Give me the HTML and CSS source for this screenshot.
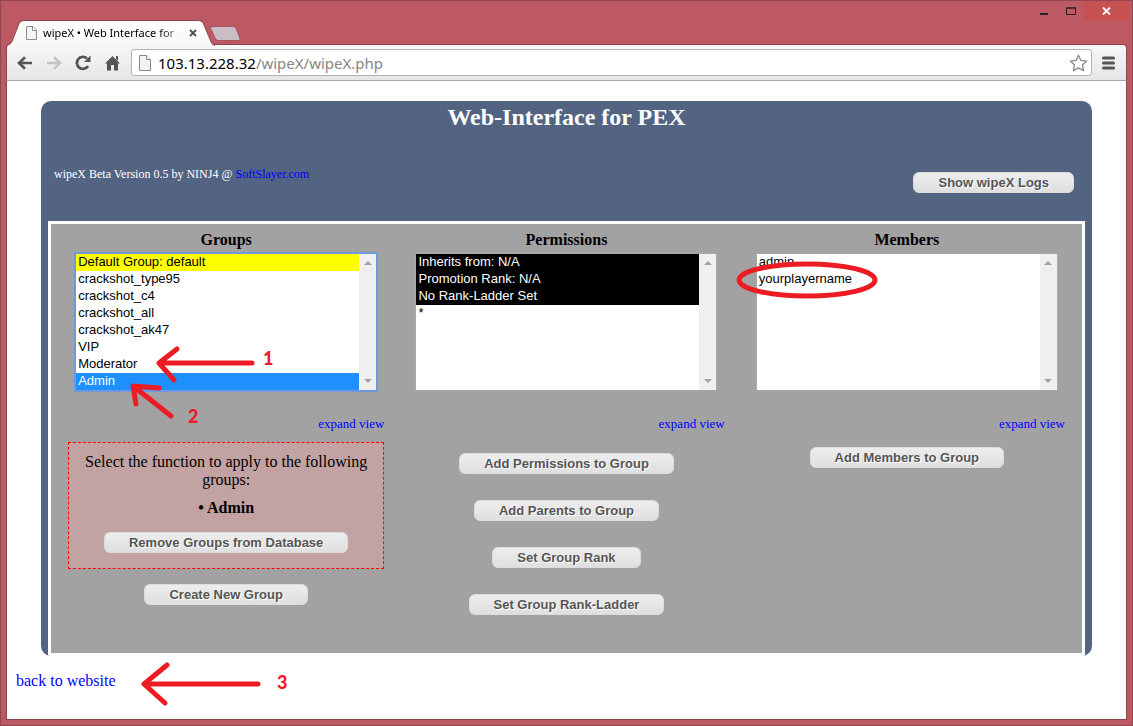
FILE: index.html
```html
<!DOCTYPE html>
<html lang="en">
<head>
<meta charset="utf-8">
<title>wipeX • Web Interface for PEX</title>
<link rel="stylesheet" href="styles.css">
</head>
<body>
<div class="window">
  <header class="titlebar">
    <div class="tab">
      <svg class="tab-shape" width="208" height="26" viewBox="0 0 208 25" preserveAspectRatio="none" aria-hidden="true">
        <defs><linearGradient id="tabfill" x1="0" y1="0" x2="0" y2="1"><stop offset="0" stop-color="#fff"/><stop offset="1" stop-color="#f7f7f7"/></linearGradient></defs>
        <path d="M0 24.500Q4 23 5 20.500L12 3.500Q13.500.5 17 .5H191Q195 .5 196.500 3.500L204 21Q205.500 24 208 24.500V25H0Z" fill="url(#tabfill)"/>
        <path d="M0 24.500Q4 23 5 20.500L12 3.500Q13.500.5 17 .5H191Q195 .5 196.500 3.500L204 21Q205.500 24 208 24.500" fill="none" stroke="#8d444d"/>
      </svg>
      <svg class="tab-icon" width="11" height="14" viewBox="0 0 11 14" aria-hidden="true"><path d="M.5.500H7L10.500 4V13.500H.5Z" fill="#f3f3f3" stroke="#8c8c8c"/><path d="M6.500.500V4.500H10.500" fill="#fff" stroke="#8c8c8c"/></svg>
      <span class="tab-title">wipeX • Web Interface for</span>
      <button class="tab-close" aria-label="Close tab"><svg width="8" height="8" viewBox="0 0 8 8"><path d="M1 1L7 7M7 1L1 7" stroke="#4d4d4d" stroke-width="1.800"/></svg></button>
    </div>
    <button class="new-tab" aria-label="New tab"><svg width="31" height="15" viewBox="0 0 31 15"><path d="M2 .5H23Q25 .5 26 2.500L30 12.500Q30.500 14.500 28.500 14.500H8.500Q6 14.500 5 12L.7 2.500Q.3.5 2 .5Z" fill="#cbbdc6" stroke="#a8525d"/></svg></button>
    <div class="window-buttons">
      <button class="win" aria-label="Minimize"><svg width="10" height="10" viewBox="0 0 10 10"><path d="M1 8H9" stroke="#222" stroke-width="2"/></svg></button>
      <button class="win" aria-label="Maximize"><svg width="10" height="8" viewBox="0 0 10 8"><path d="M.5 1H9.500V7.500H.5ZM0 1H10" fill="none" stroke="#222"/></svg></button>
      <button class="win win-close" aria-label="Close"><svg width="9" height="8" viewBox="0 0 9 8"><path d="M1 .5L8 7.500M8 .5L1 7.500" stroke="#fff" stroke-width="1.800"/></svg></button>
    </div>
  </header>
  <nav class="toolbar">
    <button class="tool" aria-label="Back"><svg width="16" height="14" viewBox="0 0 16 14"><path d="M15 7H2.500M8 1.200L2 7L8 12.800" fill="none" stroke="#555" stroke-width="2.600"/></svg></button>
    <button class="tool" aria-label="Forward"><svg width="16" height="14" viewBox="0 0 16 14"><path d="M1 7H13.500M8 1.200L14 7L8 12.800" fill="none" stroke="#c4c4c4" stroke-width="2.400"/></svg></button>
    <button class="tool" aria-label="Reload"><svg width="16" height="16" viewBox="0 0 16 16"><path d="M13 11A6 6 0 1 1 12 3.500" fill="none" stroke="#555" stroke-width="2.800"/><path d="M15.500.500V7H9Z" fill="#555"/></svg></button>
    <button class="tool" aria-label="Home"><svg width="15" height="16" viewBox="0 0 15 16"><path d="M7.500 1L15 8.500H13V15.500H9V10H6V15.500H2V8.500H0Z" fill="#555"/><path d="M11 1H13V6L11 4Z" fill="#555"/></svg></button>
    <div class="address">
      <svg width="12" height="16" viewBox="0 0 12 16" aria-hidden="true"><path d="M.5.500H7.500L11.500 4.500V15.500H.5Z" fill="#f3f3f3" stroke="#888"/><path d="M7.500.500V4.500H11.500" fill="#fff" stroke="#888"/></svg>
      <span class="url">103.13.228.32<span class="url-path">/wipeX/wipeX.php</span></span>
      <button class="star" aria-label="Bookmark this page"><svg width="19" height="18" viewBox="0 0 19 18"><path d="M9.500 1.200L11.900 6.400L17.700 7.100L13.500 11L14.600 16.700L9.500 13.900L4.400 16.700L5.500 11L1.300 7.100L7.100 6.400Z" fill="#fff" stroke="#888" stroke-width="1.300" stroke-linejoin="round"/></svg></button>
    </div>
    <button class="tool menu" aria-label="Menu"><svg width="13" height="14" viewBox="0 0 13 14"><path d="M1.500 2H11.500M1.500 7H11.500M1.500 12H11.500" stroke="#555" stroke-width="3" stroke-linecap="round"/></svg></button>
  </nav>
  <main class="page">
    <section class="panel">
      <h1>Web-Interface for PEX</h1>
      <div class="info">
        <p class="version">wipeX Beta Version 0.5 by NINJ4 @ <a href="#">SoftSlayer.com</a></p>
        <button class="btn">Show wipeX Logs</button>
      </div>
      <div class="columns">
        <section class="column">
          <label class="heading" for="groups">Groups</label>
          <div class="listbox focused">
            <select id="groups" size="8" multiple>
              <option class="default">Default Group: default</option>
              <option>crackshot_type95</option>
              <option>crackshot_c4</option>
              <option>crackshot_all</option>
              <option>crackshot_ak47</option>
              <option>VIP</option>
              <option>Moderator</option>
              <option selected>Admin</option>
            </select>
            <div class="scrollbar"><i class="up"></i><i class="down"></i></div>
            <svg class="mark" width="240" height="180" viewBox="0 0 240 180">
              <path d="M176 109H83L101 95M83 109L98 126"/>
              <path d="M95 162L57 132L83 134M57 132L60 150"/>
              <text x="187" y="111">1</text><text x="112" y="169">2</text>
            </svg>
          </div>
          <a class="expand" href="#">expand view</a>
          <div class="function-box">
            <p>Select the function to apply to the following groups:</p>
            <p><b>• Admin</b></p>
            <button class="btn">Remove Groups from Database</button>
          </div>
          <button class="btn">Create New Group</button>
        </section>
        <section class="column">
          <label class="heading" for="permissions">Permissions</label>
          <div class="listbox">
            <select id="permissions" size="8" multiple>
              <option class="meta">Inherits from: N/A</option>
              <option class="meta">Promotion Rank: N/A</option>
              <option class="meta">No Rank-Ladder Set</option>
              <option>*</option>
            </select>
            <div class="scrollbar"><i class="up"></i><i class="down"></i></div>
          </div>
          <a class="expand" href="#">expand view</a>
          <div class="actions">
            <button class="btn">Add Permissions to Group</button>
            <button class="btn">Add Parents to Group</button>
            <button class="btn">Set Group Rank</button>
            <button class="btn">Set Group Rank-Ladder</button>
          </div>
        </section>
        <section class="column">
          <label class="heading" for="members">Members</label>
          <div class="listbox">
            <select id="members" size="8" multiple>
              <option>admin</option>
              <option>yourplayername</option>
            </select>
            <div class="scrollbar"><i class="up"></i><i class="down"></i></div>
            <svg class="mark" width="130" height="60" viewBox="0 0 130 60"><ellipse cx="50" cy="26" rx="68" ry="16"/></svg>
          </div>
          <a class="expand" href="#">expand view</a>
          <button class="btn add-members">Add Members to Group</button>
        </section>
      </div>
    </section>
    <footer class="footer">
      <a href="#">back to website</a>
      <svg class="footer-mark" width="160" height="48" viewBox="0 0 160 48"><path d="M117 27L3 27L26 8M3 27L24 46"/><text x="136" y="32">3</text></svg>
    </footer>
  </main>
</div>
</body>
</html>
```
FILE: styles.css
```css
* { box-sizing: border-box; }
body { margin: 0; background: #bc5963; font-family: "Liberation Serif", "Times New Roman", serif; font-size: 16px; line-height: 18px; color: #000; }
button { border: 0; padding: 0; background: none; font: inherit; }
p, h1 { margin: 0; }
a { color: #00f; text-decoration: none; }

.window { min-height: 100vh; display: flex; flex-direction: column; border: 1px solid #914750; padding: 0 5px 5px; }
.titlebar { height: 43px; display: flex; align-items: flex-end; padding-left: 4px; }
.tab { position: relative; z-index: 1; width: 200px; height: 25px; display: flex; align-items: center; padding-left: 16px; margin-bottom: -1px; font: 11px/18px "Noto Sans", "Open Sans", sans-serif; }
.tab-shape { position: absolute; left: -3px; top: 0; }
.tab-icon { position: relative; flex: none; }
.tab-title { position: relative; width: 138px; flex: none; margin-left: 6px; white-space: nowrap; -webkit-mask-image: linear-gradient(90deg, #000 116px, rgba(0,0,0,.3)); mask-image: linear-gradient(90deg, #000 116px, rgba(0,0,0,.3)); }
.tab-close { position: relative; display: flex; margin-left: 8px; }
.new-tab { display: flex; margin-bottom: 3px; }
.window-buttons { align-self: flex-start; display: flex; align-items: flex-start; margin-left: auto; margin-right: -2px; }
.win { width: 27px; height: 20px; display: flex; align-items: center; justify-content: center; }
.win-close { width: 45px; background: #c75050; }

.toolbar { height: 37px; display: flex; align-items: center; gap: 13px; padding: 0 10px; background: linear-gradient(#f7f7f7, #e6e6e6); border: 1px solid #8d444d; border-bottom-color: #a6a6a6; border-radius: 4px 4px 0 0; }
.tool { width: 16px; display: flex; justify-content: center; }
.address { flex: 1; min-width: 0; height: 27px; display: flex; align-items: center; gap: 7px; margin-left: -2px; padding: 0 3px 0 7px; background: #fff; border: 1px solid #b3b3b3; border-radius: 3px; font: 15px/24px "Noto Sans", "Open Sans", sans-serif; }
.url { flex: 1; overflow: hidden; white-space: nowrap; }
.url-path { color: #858585; }
.star { display: flex; }
.menu { margin-left: -5px; }

.page { flex: 1; background: #fff; border: 1px solid #8d444d; border-top: 0; padding: 20px 9px 10px; }
.panel { margin: 0 25px; padding: 0 7px; background: #536482; border-radius: 10px; overflow: hidden; }
h1 { height: 60px; padding-top: 3px; font-size: 24px; line-height: 27px; color: #fff; text-align: center; }
.info { height: 60px; display: flex; justify-content: space-between; align-items: flex-start; padding: 4px 11px 0 6px; }
.version { color: #fff; font-size: 12px; }
.info .btn { margin-top: 7px; }
.btn { height: 21px; padding: 0 24px; border: 1px solid #dcdcdc; border-radius: 6px; background: linear-gradient(#ededed, #dfdfdf); color: #555; font: bold 13px/19px "Liberation Sans", Arial, sans-serif; text-shadow: 1px 1px 0 #fff; white-space: nowrap; }

.columns { display: grid; grid-template-columns: repeat(3, 1fr); padding: 7px 5px 38px; background: #a2a2a2; border: 3px solid #fff; }
.column { display: flex; flex-direction: column; align-items: center; padding: 0 12px; }
.heading { font-weight: bold; margin-bottom: 4px; }
.listbox { position: relative; width: 302px; display: flex; border: 1px solid #a9a9a9; background: #fff; }
.focused { border-color: #7098dc; box-shadow: 0 0 0 1px #7098dc; }
select { flex: 1; min-width: 0; height: 136px; margin: 0; padding: 0; border: 0; border-radius: 0; outline: 0; overflow: hidden; background: #fff; color: #000; font: 13px/17px "Liberation Sans", Arial, sans-serif; }
option { height: 17px; min-height: 17px; padding: 0 2px; line-height: 17px; }
option.default { background: #ff0; }
option.meta { background: #000; color: #fff; }
option:checked { background: linear-gradient(#1e90ff, #1e90ff); color: #fff; -webkit-text-fill-color: #fff; }
.scrollbar { width: 17px; display: flex; flex-direction: column; justify-content: space-between; align-items: center; padding: 7px 0; background: #f0f0f0; }
.up, .down { border: 4px solid transparent; border-top-width: 0; border-bottom: 4px solid #a3a3a3; }
.down { border-bottom-width: 0; border-top: 4px solid #a3a3a3; }
.expand { align-self: flex-end; margin: 24px 0 9px; font-size: 13px; }
.function-box { align-self: stretch; margin-bottom: 15px; padding: 10px 12px 15px; display: flex; flex-direction: column; align-items: center; gap: 10px; border: 1px dashed #f00; background: #c2a2a2; text-align: center; }
.function-box .btn { margin-top: 5px; }
.actions { display: flex; flex-direction: column; align-items: center; gap: 26px; padding-top: 11px; }
.add-members { margin-top: 5px; }

.footer { display: flex; align-items: center; margin-top: 1px; }
.footer-mark { margin-left: 25px; overflow: visible; }
.mark { position: absolute; left: 0; top: 0; overflow: visible; pointer-events: none; }
.mark path, .mark ellipse, .footer-mark path { fill: none; stroke: #ed1c24; stroke-width: 5px; stroke-linecap: round; stroke-linejoin: round; }
.mark text, .footer-mark text { fill: #ed1c24; font: 900 18px Lato, sans-serif; }
```
